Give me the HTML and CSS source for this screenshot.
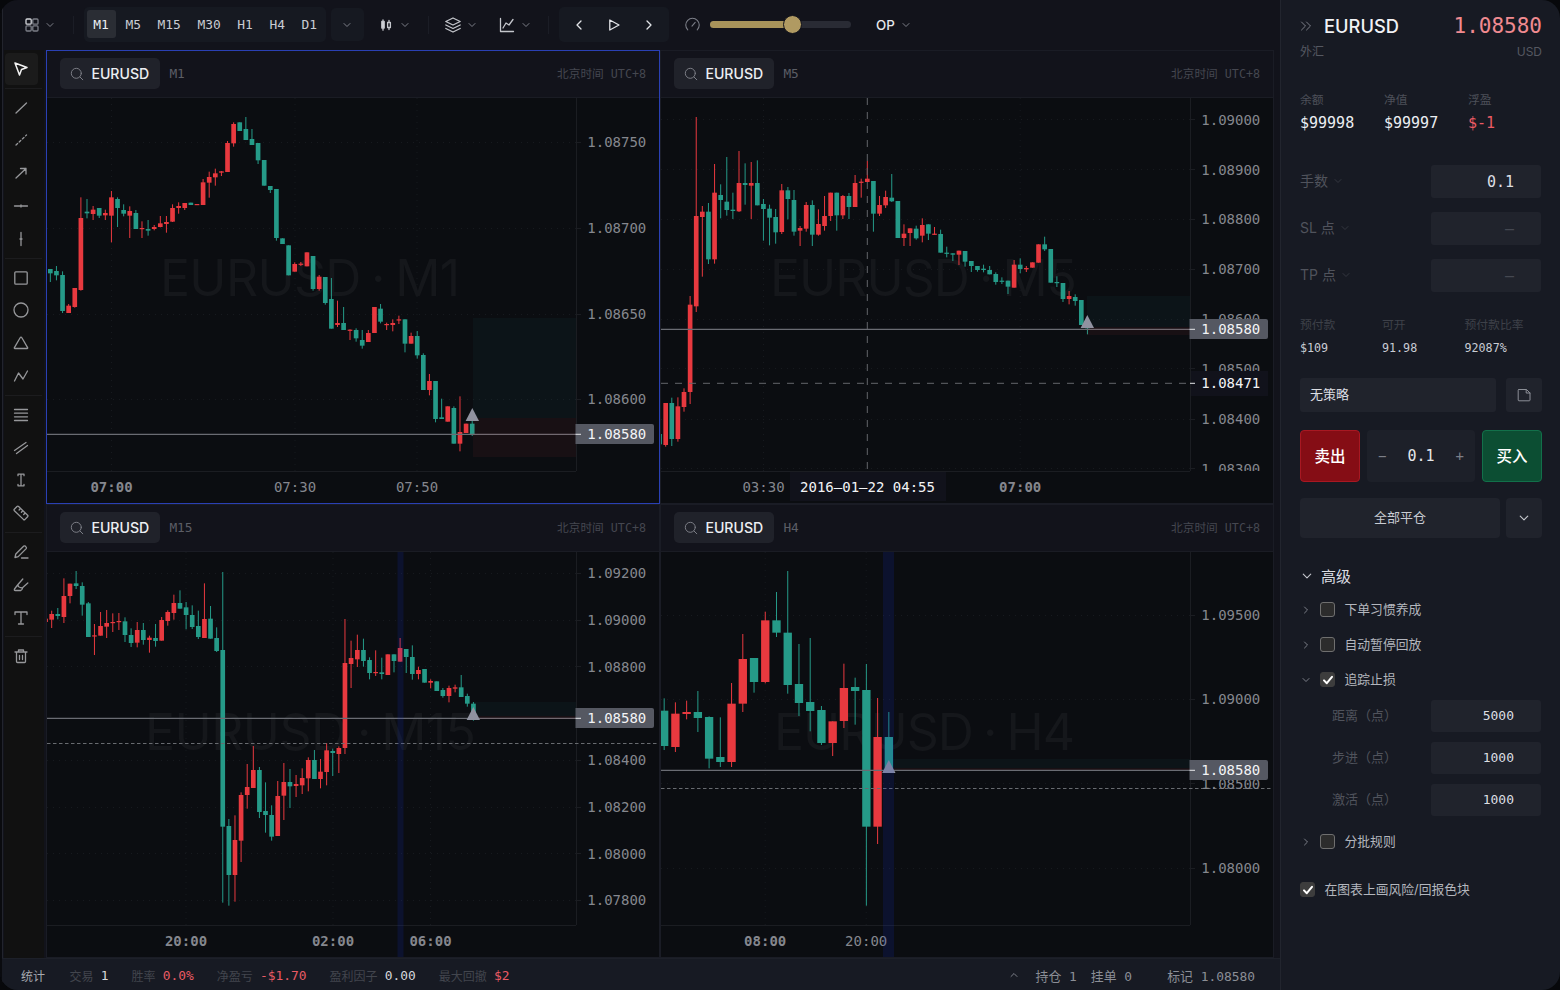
FILE: index.html
```html
<!DOCTYPE html>
<html lang="zh-CN">
<head>
  <meta charset="UTF-8" />
  <meta name="viewport" content="width=device-width, initial-scale=1.0" />
  <title>EURUSD</title>
  <link rel="stylesheet" href="styles.css">
</head>
<body>
  <svg class="defs">
    <symbol id="down" viewBox="0 0 8 8"><path d="M1 2.5l3 3 3-3" /></symbol>
    <symbol id="right" viewBox="0 0 8 8"><path d="M2.5 1l3 3-3 3" /></symbol>
    <symbol id="search" viewBox="0 0 14 14"><circle cx="6.3" cy="6.3" r="5" /><path d="M10 10l2.8 2.8" /></symbol>
    <symbol id="check" viewBox="0 0 14 14"><path d="M3 7.4l2.8 2.8L11 3.8" /></symbol>
  </svg>

  <div class="app">
    <div class="main">
      <header class="toolbar">
        <div class="tool layout">
          <svg class="icon i14 dim" viewBox="0 0 14 14"><rect x="1" y="1" width="5.2" height="5.2" rx="1" stroke="#d5d7dc" /><rect x="7.8" y="1" width="5.2" height="5.2" rx="1" /><rect x="1" y="7.8" width="5.2" height="5.2" rx="1" /><rect x="7.8" y="7.8" width="5.2" height="5.2" rx="1" /></svg>
          <svg class="icon chev"><use href="#down" /></svg>
        </div>
        <i class="vsep s1"></i>
        <div class="frames">
          <span class="on">M1</span><span>M5</span><span>M15</span><span>M30</span><span>H1</span><span>H4</span><span>D1</span>
        </div>
        <div class="more"><svg class="icon chev"><use href="#down" /></svg></div>
        <div class="tool candle">
          <svg class="icon i12" viewBox="0 0 12 12"><path d="M3 .8v10.4M9 1.5v9" /><rect x="1.8" y="2.5" width="2.4" height="6.5" fill="#d5d7dc" /><rect x="7.6" y="3.5" width="2.8" height="5" fill="#12131b" /></svg>
          <svg class="icon chev"><use href="#down" /></svg>
        </div>
        <i class="vsep s2"></i>
        <div class="tool layers">
          <svg class="icon i16" viewBox="0 0 16 16"><path d="M8 1L.8 4.5 8 8l7.2-3.5zM.8 8L8 11.5 15.2 8M.8 11.5L8 15l7.2-3.5" /></svg>
          <svg class="icon chev"><use href="#down" /></svg>
        </div>
        <div class="tool indicator">
          <svg class="icon i16" viewBox="0 0 16 16"><path d="M1.5 1.5v13h13M4 11l3-5 3 2 4-5.5" /></svg>
          <svg class="icon chev"><use href="#down" /></svg>
        </div>
        <i class="vsep s3"></i>
        <div class="playback">
          <svg class="icon i12" viewBox="0 0 12 12"><path d="M8 2L4 6l4 4" /></svg>
          <svg class="icon i12" viewBox="0 0 12 12"><path d="M1.8 1v10L11 6z" /></svg>
          <svg class="icon i12" viewBox="0 0 12 12"><path d="M4 2l4 4-4 4" /></svg>
        </div>
        <svg class="icon gauge dim" viewBox="0 0 14 14"><path d="M2.6 12a6.3 6.3 0 1 1 8.8 0M6.5 8.5L9.5 5" /></svg>
        <div class="slider"><div class="fill"></div><div class="thumb"></div></div>
        <div class="tool op"><b>OP</b><svg class="icon chev"><use href="#down" /></svg></div>
      </header>

      <div class="work">
        <nav class="rail">
          <span class="on"><svg class="icon i16" viewBox="0 0 16 16"><path d="M2 2l12 4.5L8.5 8.5 6.5 14z" /></svg></span>
          <i></i>
          <span><svg class="icon i16" viewBox="0 0 16 16"><path d="M3 13L13.5 3" /></svg></span>
          <span><svg class="icon i16" viewBox="0 0 16 16"><path d="M3 13L13.5 3" stroke-dasharray="2.2 2.2" /></svg></span>
          <span><svg class="icon i16" viewBox="0 0 16 16"><path d="M3 13l10-9.5M7.5 3.5H13V9" /></svg></span>
          <span><svg class="icon i16" viewBox="0 0 16 16"><path d="M1.5 8h13M8 7v2" /></svg></span>
          <span><svg class="icon i16" viewBox="0 0 16 16"><path d="M8 1.5v13M7 8h2" /></svg></span>
          <i></i>
          <span><svg class="icon i16" viewBox="0 0 16 16"><rect x="1.8" y="1.8" width="12.4" height="12.4" rx="1" /></svg></span>
          <span><svg class="icon i16" viewBox="0 0 16 16"><circle cx="8" cy="8" r="7" /></svg></span>
          <span><svg class="icon i16" viewBox="0 0 16 16"><path d="M8 2.2Q8.5 2.2 9 3l5.6 9.6q.4.9-.5.9H1.9q-.9 0-.5-.9L7 3q.5-.8 1-.8z" /></svg></span>
          <span><svg class="icon i16" viewBox="0 0 16 16"><path d="M1.5 13l4-8 4.5 6 4.5-8" /></svg></span>
          <i></i>
          <span><svg class="icon i16" viewBox="0 0 16 16"><path d="M1.5 2.5h13M1.5 6.2h13M1.5 9.8h13M1.5 13.5h13" /></svg></span>
          <span><svg class="icon i16" viewBox="0 0 16 16"><path d="M1.5 10.5L13 2.5M3.5 13.5l11-8" /></svg></span>
          <span><svg class="icon i16" viewBox="0 0 16 16"><path d="M5 3.7V2.2h6v1.5M5 12.3v1.5h6v-1.5M8 2.2v11.6" /></svg></span>
          <span><svg class="icon i16" viewBox="0 0 16 16"><path d="M1.3 4.2L4 1.5q.8-.7 1.6 0l9 8.7q.7.8 0 1.5l-2.6 2.7q-.8.7-1.6 0l-9-8.7q-.8-.8-.1-1.5zM7.5 3.5L6.1 5M9.8 5.8L8.4 7.3M12.1 8L10.7 9.5" /></svg></span>
          <i></i>
          <span><svg class="icon i16" viewBox="0 0 16 16"><path d="M2 13.5l.8-3.5 8-8q1.2-.6 2.2.8.8 1 .2 1.8l-8 8zM8.5 14H15" /></svg></span>
          <span><svg class="icon i16" viewBox="0 0 16 16"><path d="M9.8 2L5 7.5q-.5 3 4.2 3.5L14.8 6M5 7.5L1.5 12q-.6 1.5.8 1.5h5.5q1.5-.8 1.8-2.5" /></svg></span>
          <span><svg class="icon i16" viewBox="0 0 16 16"><path d="M2 4.5V2h12v2.5M8 2v12M5.5 14h5" /></svg></span>
          <i></i>
          <span><svg class="icon i16" viewBox="0 0 16 16"><path d="M2 4h12M5.5 4V2h5v2M3.5 4v9.5q0 1 1 1h7q1 0 1-1V4M6.5 7.5v4M9.5 7.5v4" /></svg></span>
        </nav>

        <div class="charts">
          <section class="pane active">
            <div class="pane-head"><span class="symbol"><svg class="icon i14"><use href="#search" /></svg>EURUSD</span><span class="tf">M1</span><span class="zone">北京时间 UTC+8</span></div>
            <svg class="chart" id="m1" viewBox="47 98 612 405"></svg>
          </section>
          <section class="pane">
            <div class="pane-head"><span class="symbol"><svg class="icon i14"><use href="#search" /></svg>EURUSD</span><span class="tf">M5</span><span class="zone">北京时间 UTC+8</span></div>
            <svg class="chart" id="m5" viewBox="661 98 612 405"></svg>
          </section>
          <section class="pane">
            <div class="pane-head"><span class="symbol"><svg class="icon i14"><use href="#search" /></svg>EURUSD</span><span class="tf">M15</span><span class="zone">北京时间 UTC+8</span></div>
            <svg class="chart" id="m15" viewBox="47 552 612 405"></svg>
          </section>
          <section class="pane">
            <div class="pane-head"><span class="symbol"><svg class="icon i14"><use href="#search" /></svg>EURUSD</span><span class="tf">H4</span><span class="zone">北京时间 UTC+8</span></div>
            <svg class="chart" id="h4" viewBox="661 552 612 405"></svg>
          </section>
        </div>
      </div>

      <footer class="status">
        <span class="title">统计</span>
        <span class="stat">交易 <b>1</b></span>
        <span class="stat">胜率 <b class="loss">0.0%</b></span>
        <span class="stat">净盈亏 <b class="loss">-$1.70</b></span>
        <span class="stat">盈利因子 <b>0.00</b></span>
        <span class="stat">最大回撤 <b class="loss">$2</b></span>
        <svg class="icon chev fold"><use href="#down" /></svg>
        <span class="pos">持仓 1</span><span class="pos">挂单 0</span><span class="pos mark">标记 1.08580</span>
      </footer>
    </div>

    <aside class="panel">
      <div class="quote">
        <svg class="icon collapse" viewBox="0 0 12 10"><path d="M1.5 1l4 4-4 4M6.5 1l4 4-4 4" /></svg>
        <span class="name">EURUSD</span>
        <span class="price">1.08580</span>
      </div>
      <div class="quote-sub"><span>外汇</span><span>USD</span></div>

      <div class="account">
        <div><label>余额</label><b>$99998</b></div>
        <div><label>净值</label><b>$99997</b></div>
        <div><label>浮盈</label><b class="loss">$-1</b></div>
      </div>

      <div class="fields">
        <div class="field"><label>手数 <svg class="icon chev"><use href="#down" /></svg></label><span class="input">0.1</span></div>
        <div class="field"><label>SL 点 <svg class="icon chev"><use href="#down" /></svg></label><span class="input empty">—</span></div>
        <div class="field"><label>TP 点 <svg class="icon chev"><use href="#down" /></svg></label><span class="input empty">—</span></div>
      </div>

      <div class="margin">
        <div><label>预付款</label><b>$109</b></div>
        <div><label>可开</label><b>91.98</b></div>
        <div><label>预付款比率</label><b>92087%</b></div>
      </div>

      <div class="strategy">
        <span class="select">无策略</span>
        <span class="save"><svg class="icon i14" viewBox="0 0 14 14"><path d="M2 1.5h7.5L13 5v7q0 .8-.8.8H2q-.8 0-.8-.8V2.3q0-.8.8-.8zM9.2 1.8V5H13" /></svg></span>
      </div>

      <div class="order">
        <button class="sell">卖出</button>
        <div class="stepper"><i>−</i><b>0.1</b><i>+</i></div>
        <button class="buy">买入</button>
      </div>

      <div class="close-all">
        <span class="all">全部平仓</span>
        <span class="drop"><svg class="icon i10"><use href="#down" /></svg></span>
      </div>

      <div class="adv-title"><svg class="icon i10"><use href="#down" /></svg>高级</div>
      <div class="opt"><svg class="icon chev"><use href="#right" /></svg><span class="box"></span>下单习惯养成</div>
      <div class="opt"><svg class="icon chev"><use href="#right" /></svg><span class="box"></span>自动暂停回放</div>
      <div class="opt"><svg class="icon chev"><use href="#down" /></svg><span class="box checked"><svg class="icon i14"><use href="#check" /></svg></span>追踪止损</div>
      <div class="trail">
        <div class="field"><label>距离（点）</label><span class="input">5000</span></div>
        <div class="field"><label>步进（点）</label><span class="input">1000</span></div>
        <div class="field"><label>激活（点）</label><span class="input">1000</span></div>
      </div>
      <div class="opt split"><svg class="icon chev"><use href="#right" /></svg><span class="box"></span>分批规则</div>
      <div class="opt risk"><span class="box checked"><svg class="icon i14"><use href="#check" /></svg></span>在图表上画风险/回报色块</div>
    </aside>
  </div>

  <script src="charts.js"></script>
</body>
</html>
```

FILE: styles.css
```css
* {
  box-sizing: border-box;
}
body {
  margin: 0;
  width: 1560px;
  height: 990px;
  overflow: hidden;
  background: #07080b;
  color: #c9ccd3;
  font-family: Inter, 'Noto Sans CJK SC', sans-serif;
  font-size: 13px;
}
b {
  font-weight: 400;
}
.defs {
  display: none;
}
.app {
  display: flex;
  height: 990px;
  border-radius: 18px;
  overflow: hidden;
}
.main {
  width: 1280px;
  display: flex;
  flex-direction: column;
  background: #12131b;
  border-left: 2px solid #0a0b0f;
  box-shadow: inset 1px 0 #22242d;
}

/* icons */
.icon {
  fill: none;
  stroke: #c4c6cc;
  stroke-width: 1.3;
  stroke-linejoin: round;
  stroke-linecap: round;
  flex: none;
  display: block;
}
.chev {
  width: 8px;
  height: 8px;
  stroke: #7c7f88;
  stroke-width: 1;
}
.i10 {
  width: 10px;
  height: 10px;
  stroke-width: 0.9;
}
.i12 {
  width: 12px;
  height: 12px;
}
.i14 {
  width: 14px;
  height: 14px;
}
.i16 {
  width: 16px;
  height: 16px;
}
.dim {
  stroke: #7c7f88;
}

/* top toolbar */
.toolbar {
  height: 50px;
  flex: none;
  display: flex;
  align-items: center;
  padding-bottom: 1px;
}
.tool {
  display: flex;
  align-items: center;
  gap: 7px;
}
.layout {
  margin-left: 22.5px;
}
.vsep {
  width: 1px;
  height: 18px;
  background: #1b1d26;
}
.s1 {
  margin-left: 19px;
}
.frames {
  margin-left: 10px;
  width: 242px;
  height: 35px;
  padding: 3px;
  display: flex;
  gap: 3px;
  background: #161921;
  border-radius: 5px;
  font: 12.9px 'DejaVu Sans Mono', monospace;
}
.frames span {
  padding: 1px 6.8px 0;
  line-height: 27px;
  height: 28px;
  border-radius: 3px;
}
.frames .on {
  background: #2a2d34;
  color: #eceef2;
}
.more {
  margin-left: 5px;
  width: 33px;
  height: 33px;
  background: #161921;
  border-radius: 5px;
  display: flex;
  align-items: center;
  justify-content: center;
}
.candle {
  margin-left: 16px;
  gap: 9px;
}
.s2 {
  margin-left: 19px;
}
.layers {
  margin-left: 16px;
}
.indicator {
  margin-left: 23px;
}
.s3 {
  margin-left: 18px;
}
.playback {
  margin-left: 10px;
  width: 110px;
  height: 35px;
  background: #161921;
  border-radius: 5px;
  display: flex;
  align-items: center;
  justify-content: space-between;
  padding: 0 14px;
}
.playback .icon {
  stroke: #e2e4e8;
}
.gauge {
  width: 15px;
  height: 15px;
  margin-left: 16.5px;
  stroke-width: 1;
}
.slider {
  margin-left: 9.5px;
  width: 141px;
  height: 7px;
  border-radius: 4px;
  background: #292b34;
  position: relative;
}
.fill {
  width: 82px;
  height: 7px;
  border-radius: 4px;
  background: #a8935a;
}
.thumb {
  position: absolute;
  left: 73px;
  top: -6px;
  width: 19px;
  height: 19px;
  border-radius: 50%;
  border: 1.5px solid #12131b;
  background: #b09a62;
}
.op {
  margin-left: 25.5px;
}
.op b {
  font-weight: 500;
  font-size: 13.3px;
  color: #e6e8ec;
}

/* drawing rail */
.work {
  flex: 1;
  display: flex;
}
.rail {
  width: 40px;
  margin-left: 2px;
  padding: 2.6px 0 0 0.5px;
  background: #111111;
}
.rail span {
  width: 33px;
  height: 32.85px;
  border-radius: 4px;
  display: flex;
  align-items: center;
  justify-content: center;
}
.rail .on {
  background: #1b1b1b;
}
.rail .icon {
  stroke: #96979a;
  stroke-width: 1.3;
}
.rail .on .icon {
  stroke: #f2f2f2;
  stroke-width: 1.5;
}
.rail i {
  display: block;
  height: 1px;
  margin: 2.4px 2px 2.4px 0;
  background: #1c1c1e;
}

/* chart panes */
.charts {
  margin-left: 2px;
  width: 1228px;
  display: grid;
  grid-template-columns: 614px 614px;
  grid-template-rows: 454px 454px;
}
.pane {
  border: 1px solid #1a1c25;
  background: #0b0d11;
}
.pane.active {
  border-color: #2a40b4;
}
.pane-head {
  height: 47px;
  display: flex;
  align-items: center;
  padding: 0 13px 1px 13.4px;
  background: #12131b;
  border-bottom: 1px solid #1a1c24;
}
.symbol {
  width: 100px;
  height: 31px;
  padding-left: 10px;
  display: flex;
  align-items: center;
  gap: 7px;
  border-radius: 5px;
  background: #20222a;
  color: #eceef2;
  font-size: 14.1px;
  font-weight: 500;
}
.symbol .icon {
  stroke: #7b7d85;
  stroke-width: 1;
}
.tf {
  margin-left: 9px;
  color: #5c5e66;
  font: 12.8px 'DejaVu Sans Mono', monospace;
}
.zone {
  margin-left: auto;
  padding-bottom: 2px;
  color: #454750;
  font: 11.7px 'DejaVu Sans Mono', 'Noto Sans CJK SC', monospace;
}
.chart {
  display: block;
  width: 612px;
  height: 405px;
}
.axis {
  fill: #85878e;
  font: 14px 'DejaVu Sans Mono', monospace;
}
.axis.mid {
  text-anchor: middle;
}
.axis.major {
  font-weight: bold;
}
.axis.tagged {
  fill: #f3f4f6;
}
.watermark {
  fill: #15171b;
  font: 50px Inter, sans-serif;
  word-spacing: -3px;
}
.grid {
  stroke: #171a1f;
  stroke-dasharray: 1 5;
}
.frame {
  stroke: #1b1d22;
  fill: none;
}
.price-line {
  stroke: #6a6c73;
  stroke-width: 1.2;
}
.sync {
  stroke: #686b70;
  stroke-dasharray: 3.5 2.5;
}
.cross {
  stroke: #63666b;
  stroke-dasharray: 7 7;
}
.up {
  fill: #e8393f;
}
.down {
  fill: #259a88;
}
.profit {
  fill: rgba(38, 166, 154, 0.05);
}
.risk-zone {
  fill: rgba(239, 60, 70, 0.06);
}
.band {
  fill: rgba(20, 50, 200, 0.16);
}
.marker {
  fill: #9092a0;
}

/* status bar */
.status {
  height: 32px;
  flex: none;
  display: flex;
  align-items: center;
  padding: 1px 25px 0 19px;
  background: #171a23;
  border-top: 1px solid #1d2029;
  font: 12.9px 'DejaVu Sans Mono', 'Noto Sans CJK SC', monospace;
}
.title {
  font-size: 12px;
  width: 25.5px;
  color: #a6a9b0;
}
.stat {
  margin-left: 23px;
  display: flex;
  align-items: center;
  gap: 7.2px;
  color: #42454d;
  font-size: 12px;
}
.stat b {
  font-size: 12.9px;
  color: #d5d7dc;
}
.loss,
.stat .loss {
  color: #ea5a64;
}
.fold {
  margin-left: auto;
  transform: rotate(180deg);
}
.pos {
  color: #8b8e96;
  margin-left: 14px;
}
.fold + .pos {
  margin-left: 18px;
}
.mark {
  margin-left: 35px;
}

/* trade panel */
.panel {
  width: 280px;
  padding: 13px 18px 0 19px;
  background: #171a23;
  border-left: 1px solid #22252e;
}
.quote {
  height: 25px;
  display: flex;
  align-items: center;
}
.collapse {
  width: 12px;
  height: 10px;
  stroke: #7c7f88;
  stroke-width: 1;
}
.name {
  margin-left: 12px;
  font-size: 18.3px;
  font-weight: 500;
  color: #f1f2f5;
}
.price {
  margin-left: auto;
  font: 21px 'DejaVu Sans Mono', monospace;
  color: #f08a90;
}
.quote-sub {
  height: 18px;
  margin-top: 5px;
  line-height: 18px;
  display: flex;
  justify-content: space-between;
  color: #555861;
  font-size: 12px;
}
.account {
  margin-top: 31px;
  display: grid;
  grid-template-columns: 84px 84px 1fr;
}
.account label,
.margin label {
  display: block;
  height: 16px;
  line-height: 16px;
  font-size: 11.8px;
  color: #4d5059;
}
.account b {
  display: block;
  height: 22px;
  margin-top: 4px;
  font: 15px/22px 'DejaVu Sans Mono', monospace;
  color: #eceef2;
}
.account .loss {
  color: #ea5a64;
}
.fields {
  margin-top: 31px;
  padding-right: 1px;
  display: flex;
  flex-direction: column;
  gap: 14px;
}
.field {
  display: flex;
  justify-content: space-between;
  align-items: center;
}
.field label {
  display: flex;
  align-items: center;
  gap: 6px;
  padding-bottom: 3px;
  color: #50535c;
  font-size: 14px;
}
.field .chev {
  margin-top: 2px;
  stroke: #343740;
}
.input {
  width: 110px;
  height: 33px;
  padding-right: 27px;
  border-radius: 3px;
  background: #20232c;
  text-align: right;
  font: 15px/34px 'DejaVu Sans Mono', monospace;
  color: #dcdee3;
}
.empty {
  color: #454851;
}
.margin {
  margin-top: 25px;
  display: grid;
  grid-template-columns: 82px 82.5px 1fr;
}
.margin label {
  color: #3e4149;
}
.margin b {
  display: block;
  margin-top: 6px;
  font: 11.7px/18px 'DejaVu Sans Mono', monospace;
}
.strategy,
.order,
.close-all {
  display: flex;
  justify-content: space-between;
}
.strategy {
  margin-top: 21px;
}
.select,
.save {
  height: 34px;
  background: #20232c;
  border-radius: 3px;
}
.select {
  width: 196px;
  padding-left: 10px;
  line-height: 33px;
  color: #dcdee3;
}
.save,
.drop {
  width: 36px;
  display: flex;
  align-items: center;
  justify-content: center;
}
.save .icon {
  stroke: #8c8f97;
  stroke-width: 1;
}
.order {
  margin-top: 18px;
}
.order button {
  width: 60px;
  height: 52px;
  padding: 0 0 3px;
  border-radius: 4px;
  color: #fff;
  font: 500 15.5px 'Noto Sans CJK SC', sans-serif;
}
.order .sell {
  background: #850d15;
  border: 1px solid #a81822;
}
.order .buy {
  background: #0c4e33;
  border: 1px solid #12704a;
}
.stepper {
  width: 108px;
  height: 52px;
  padding: 0 11px;
  display: flex;
  align-items: center;
  justify-content: space-between;
  border-radius: 4px;
  background: #1d2029;
}
.stepper i {
  font: 14px 'DejaVu Sans Mono', monospace;
  color: #7c7f88;
}
.stepper b {
  font: 15px 'DejaVu Sans Mono', monospace;
  color: #e4e6ea;
}
.close-all {
  margin-top: 16px;
  height: 40px;
}
.all,
.drop {
  border-radius: 4px;
  background: #20232c;
}
.all {
  width: 200px;
  text-align: center;
  line-height: 39px;
}
.adv-title {
  margin-top: 25px;
  height: 25px;
  padding-left: 2px;
  display: flex;
  align-items: center;
  gap: 9px;
  font-size: 15px;
  color: #dcdee3;
}
.opt {
  height: 35px;
  padding-left: 2px;
  display: flex;
  align-items: center;
  color: #b3b6bd;
  font-size: 12.8px;
  line-height: 18px;
}
.adv-title + .opt {
  margin-top: 4px;
}
.box {
  width: 15px;
  height: 15px;
  margin: 0 9.5px 0 10px;
  border: 1px solid #6f6f6f;
  border-radius: 3px;
  background: #2c2c2c;
}
.checked {
  border-color: #3d3d3d;
  background: #3d3d3d;
}
.checked .icon {
  margin: -0.5px;
  stroke: #fff;
  stroke-width: 2;
}
.trail {
  margin-top: 3px;
  padding: 0 1px 0 32px;
  display: flex;
  flex-direction: column;
  gap: 10px;
}
.trail label {
  font-size: 13px;
}
.trail .input {
  height: 32px;
  font-size: 13px;
  line-height: 32px;
}
.split {
  margin-top: 8px;
}
.risk {
  margin-top: 13px;
  padding-left: 0;
}
.risk .box {
  margin-left: 0;
}
```

FILE: charts.js
```js
// Bars are [high, open, close, low] as y offsets in thirds of a pixel from the run's origin.
const UNIT = 1 / 3;

const charts = [
  {
    id: "m1", left: 47, top: 98, axisX: 576, axisY: 471, bar: 14, step: 18.33,
    prices: [["1.08750", 142], ["1.08700", 228], ["1.08650", 314], ["1.08600", 399]],
    times: [["07:00", 111, 1], ["07:30", 294.5], ["07:50", 416.5]],
    mark: ["EURUSD · M1", 160, 296, 300], last: 434, marker: [472, 408],
    profit: [473, 318, 100], risk: [473, 418, 39],
    runs: [
      { x: 45, y: 95, first: 16, bars: [
        [522,522,535,561],[513,528,541,556],[529,540,648,654],[627,654,632,654],[579,636,579,638],[307,585,369,587],
        [312,350,355,370],[333,357,344,375],[339,339,362,369],[344,361,354,375],[288,362,307,442],[307,312,339,396],
        [328,345,356,364],[334,362,348,429],[345,354,402,402],[379,402,399,429],[375,402,407,422],[390,402,396,406],
        [363,396,385,397],[363,387,381,413],[328,380,339,381],[322,339,333,356],[324,339,324,345],[323,323,330,330],
        [327,330,327,330],[252,330,262,330],[230,263,246,308],[221,247,235,272],[228,233,229,243],[138,231,144,231],
        [82,145,87,155],[82,82,108,108],[66,102,135,135],[102,132,150,150],[144,144,196,207],[195,195,272,272],
        [273,273,285,294],[282,282,429,437],[430,430,447,447],[451,451,541,541],[502,530,507,530],[501,509,506,513],
        [472,514,472,514],[483,483,582,587],[540,582,545,587],[546,546,624,629],[549,612,701,701],[617,690,684,696],
        [636,684,705,705]] },
      { x: 340, y: 200, first: 30, bars: [
        [388,392,389,420],[385,390,415,425],[390,420,437,446],[390,426,399,426],[321,399,321,399],[312,326,365,370],
        [368,375,372,390],[358,375,369,394],[347,361,358,372],[358,358,431,457],[398,431,408,431],[393,408,466,476],
        [460,465,570,570],[522,570,543,586],[543,543,657,667],[596,652,657,657],[619,665,619,665],[619,624,731,731],
        [589,731,696,754],[671,699,671,699],[662,671,703,708]] }
    ]
  },
  {
    id: "m5", left: 661, top: 98, axisX: 1190, axisY: 471, bar: 14, step: 18.33,
    prices: [["1.09000", 119.4], ["1.08900", 169.4], ["1.08800", 219], ["1.08700", 269], ["1.08600", 319], ["1.08500", 368.3], ["1.08400", 419], ["1.08300", 468.4]],
    times: [["03:30", 763], ["07:00", 1019.7, 1]],
    mark: ["EURUSD · M5", 770, 296, 307], last: 329, marker: [1087, 315],
    profit: [1087, 296, 31], risk: [1087, 327, 8],
    cross: { x: 867, y: 383, price: "1.08471", time: "2016–01–22 04:55" },
    runs: [
      { x: 660, y: 95, first: -1.3, bars: [
        [1017,1017,1048,1048],[924,1050,924,1055],[908,924,1032,1053],[907,1032,934,1040],[880,936,891,950],[603,891,629,927],
        [66,634,363,651],[333,366,350,545],[324,350,493,507],[207,493,293,506],[268,300,315,370],[186,320,345,362],
        [293,344,348,372],[168,349,264,351],[205,264,270,329],[201,272,264,372],[196,264,331,331],[312,327,342,437],
        [329,341,368,451],[342,366,412,446],[267,411,286,417],[276,286,312,373],[285,315,410,422],[393,407,399,453],
        [321,401,330,410],[316,330,419,453],[343,419,387,422],[303,393,363,407],[293,363,293,378],[293,293,361,407],
        [300,361,303,372],[294,303,336,372],[240,336,264,336],[251,263,260,308],[198,261,251,261],[258,258,356,410],
        [303,356,330,363],[287,331,306,339],[237,308,319,321],[318,318,429,429],[388,429,416,453],[400,414,400,453],
        [392,401,430,434],[370,422,390,442],[388,388,416,435],[396,419,416,419],[404,417,473,473],[455,473,476,487],
        [475,475,479,498],[467,479,467,510],[468,468,500,515]] },
      { x: 960, y: 180, first: 34, bars: [
        [243,243,258,276],[258,258,270,275],[254,266,270,277],[258,270,283,283],[277,282,306,314],[292,302,305,312],
        [302,302,320,342],[240,323,254,323],[235,254,267,280],[258,268,264,276],[247,263,247,263],[193,248,193,248],
        [170,193,208,213],[207,207,308,308],[289,306,309,321],[309,309,357,366],[333,357,348,373],[343,351,363,377],
        [360,360,435,435],[435,435,445,463]] }
    ]
  },
  {
    id: "m15", left: 47, top: 552, axisX: 576, axisY: 925, bar: 14, step: 18.33,
    prices: [["1.09200", 572.6], ["1.09000", 619.6], ["1.08800", 666.4], ["1.08400", 760], ["1.08200", 806.6], ["1.08000", 853.3], ["1.07800", 900]],
    times: [["20:00", 185.5, 1], ["02:00", 332.5, 1], ["06:00", 430, 1]],
    mark: ["EURUSD · M15", 145, 750, 331], last: 718, marker: [473, 707],
    profit: [473, 702, 14], risk: [473, 716, 3], sync: 743.5, band: [397.5, 6],
    runs: [
      { x: 45, y: 550, first: 1.7, bars: [
        [206,216,206,216],[182,209,192,234],[174,192,198,208],[85,201,138,219],[101,138,101,160],[63,100,108,117],
        [97,108,164,197],[156,160,261,261],[222,259,256,315],[186,257,228,257],[180,230,219,264],[190,219,216,246],
        [189,216,213,240],[202,214,255,276],[235,255,279,291],[216,278,240,292],[219,240,270,284],[257,270,263,308],
        [222,264,273,290],[201,272,210,272],[181,213,186,227],[134,189,159,209],[121,159,176,176],[156,172,195,238],
        [166,195,231,237],[182,228,261,267],[100,264,207,264],[168,206,266,266],[232,264,303,306],[66,300,830,1058],
        [807,828,975,1067],[796,975,870,1055],[727,872,735,936],[642,735,711,776],[588,714,660,714],[651,660,786,804],
        [697,783,795,848],[766,795,860,872],[693,858,738,858],[639,737,696,810],[657,696,709,774],[675,708,702,741],
        [655,706,684,732],[622,685,630,724],[600,630,687,687],[627,687,665,715],[579,666,601,706],[596,603,609,678],
        [589,612,594,669],[207,594,339,612],[272,342,324,414]] },
      { x: 350, y: 600, first: 22, bars: [
        [104,178,150,201],[116,150,183,200],[172,180,219,238],[151,219,216,228],[173,217,222,238],[163,225,163,225],
        [163,163,183,217],[114,185,144,185],[147,147,171,219],[136,171,222,239],[200,222,210,238],[207,207,248,248],
        [238,248,243,265],[244,244,273,273],[264,270,288,293],[257,288,264,307],[254,266,262,277],[225,262,291,291],
        [281,288,311,320],[306,311,352,362]] }
    ]
  },
  {
    id: "h4", left: 661, top: 552, axisX: 1190, axisY: 925, bar: 25, step: 33.7,
    prices: [["1.09500", 614.6], ["1.09000", 698.6], ["1.08500", 783.4], ["1.08000", 868]],
    times: [["08:00", 764.7, 1], ["20:00", 865.7]],
    mark: ["EURUSD · H4", 774, 750, 301], last: 770, marker: [888.5, 760],
    profit: [889, 759, 9], risk: [889, 768, 2], sync: 788.5, band: [883, 11],
    runs: [
      { x: 660, y: 550, first: 12.5, bars: [
        [445,482,588,600],[457,591,491,606],[452,492,486,508],[423,486,504,546],[499,501,626,655],[502,621,636,651],
        [399,636,461,651],[252,461,327,486],[324,324,396,428],[185,396,211,400],[126,211,248,261],[63,248,405,431],
        [282,402,459,498],[264,456,483,544],[468,480,579,585],[514,579,514,618],[341,513,414,534],[383,411,423,524],
        [342,420,830,1067],[444,830,561,882],[486,561,662,662]] }
    ]
  }
];

function rect(cls, x, y, w, h) {
  return `<rect class="${cls}" x="${x}" y="${y}" width="${w}" height="${h}"/>`;
}

function line(cls, x1, y1, x2, y2) {
  return `<path class="${cls}" d="M${x1} ${y1}L${x2} ${y2}"/>`;
}

function drawBars(c) {
  let out = "";
  c.runs.forEach(run => {
    run.bars.forEach(([high, open, close, low], i) => {
      const x = run.x + (run.first + i * c.step) * UNIT;
      const cls = close < open ? "up" : "down";
      const top = Math.min(open, close);
      const w = c.bar * UNIT;
      out += rect(cls, x - 0.5, run.y + high * UNIT, 1, (low - high) * UNIT);
      out += rect(cls, x - w / 2, run.y + top * UNIT, w, Math.max(Math.abs(open - close) * UNIT, 1.2));
    });
  });
  return out;
}

function draw(c) {
  const right = c.left + 612;
  let out = "";
  c.prices.forEach(([, p]) => {
    const y = Math.round(p) + 0.5;
    out += line("grid", c.left, y, c.axisX, y) + line("frame", c.axisX, y, c.axisX + 5, y);
  });
  c.times.forEach(([, x]) => out += line("grid", x + 0.5, c.top, x + 0.5, c.axisY));
  out += `<text class="watermark" x="${c.mark[1]}" y="${c.mark[2]}" textLength="${c.mark[3]}">${c.mark[0]}</text>`;
  out += rect("profit", c.profit[0], c.profit[1], c.axisX - c.profit[0], c.profit[2]);
  out += drawBars(c);
  out += line("frame", c.axisX + 0.5, c.top, c.axisX + 0.5, c.axisY) + line("frame", c.left, c.axisY + 0.5, c.axisX, c.axisY + 0.5);
  out += line("price-line", c.left, c.last + 0.3, c.axisX, c.last + 0.3);
  out += rect("risk-zone", c.risk[0], c.risk[1], c.axisX - c.risk[0], c.risk[2]);
  if (c.sync) out += line("sync", c.left, c.sync, right, c.sync);

  // labels that run past the price scale are cut at its lower edge
  out += `<clipPath id="${c.id}-clip"><rect x="${c.axisX}" y="${c.top}" width="90" height="${c.axisY - c.top}"/></clipPath><g clip-path="url(#${c.id}-clip)">`;
  c.prices.forEach(([t, y]) => out += `<text class="axis" x="${c.axisX + 11.3}" y="${y + 5.3}">${t}</text>`);
  out += "</g>";
  c.times.forEach(([t, x, major]) => out += `<text class="axis mid${major ? " major" : ""}" x="${x + 0.5}" y="${c.axisY + 21}">${t}</text>`);

  const [mx, my] = c.marker;
  out += `<path class="marker" d="M${mx + 0.3} ${my}l6.7 13h-13.4z"/>`;
  if (c.band) out += rect("band", c.band[0], c.top, c.band[1], 406);

  if (c.cross) {
    const k = c.cross;
    out += line("cross", c.left, k.y + 0.3, c.axisX, k.y + 0.3) + line("cross", k.x + 0.3, c.top, k.x + 0.3, c.axisY);
    out += `<rect x="${c.axisX + 1}" y="371" width="77" height="25" fill="#11121b"/><rect x="790" y="472" width="156" height="29" fill="#11121b"/>`;
    out += `<path d="M${c.axisX} ${k.y + 0.3}h5" stroke="#e6e8ec"/>`;
    out += `<text class="axis tagged" x="${c.axisX + 11.3}" y="${k.y + 5}">${k.price}</text>`;
    out += `<text class="axis mid tagged" x="${k.x + 0.5}" y="${c.axisY + 21}">${k.time}</text>`;
  }

  out += `<path d="M${c.axisX - 0.5} ${c.last - 10}h76.5q2 0 2 2v16q0 2-2 2h-76.5z" fill="#555862"/>`;
  out += `<path d="M${c.axisX - 0.5} ${c.last + 0.3}h5.5" stroke="#e6e8ec"/>`;
  out += `<text class="axis tagged" x="${c.axisX + 11.3}" y="${c.last + 5}">1.08580</text>`;
  document.getElementById(c.id).innerHTML = out;
}

charts.forEach(draw);
```
